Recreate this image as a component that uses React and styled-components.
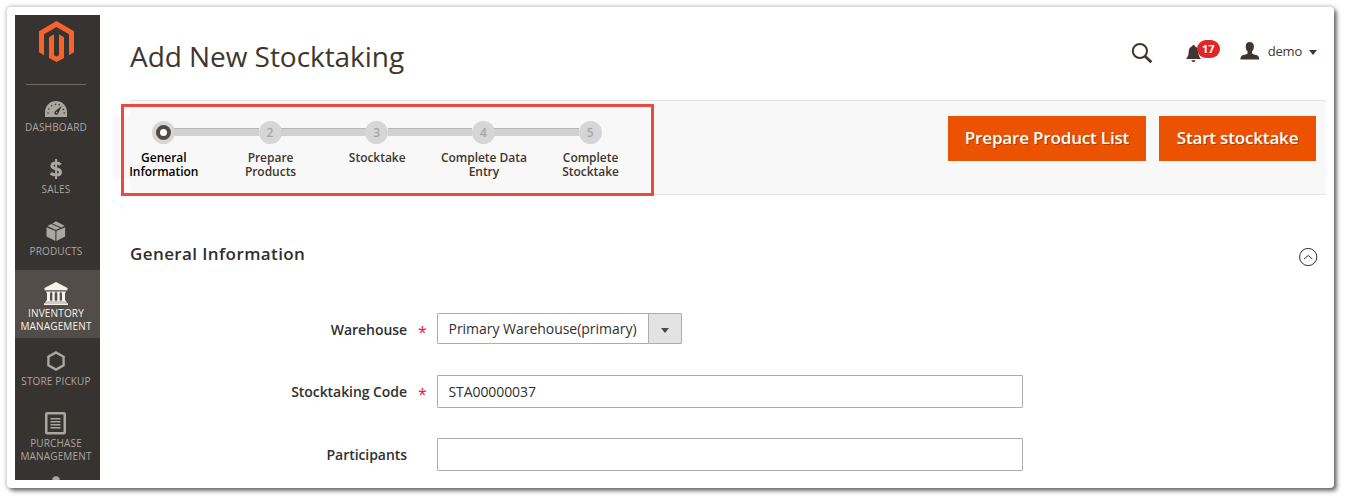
import React from "react";
import styled, { createGlobalStyle } from "styled-components";

const Global = createGlobalStyle`
  * { box-sizing: border-box; }
  html, body { margin: 0; background: #fff; }
  body { font-family: "Open Sans", "Noto Sans", sans-serif; color: #303030; overflow: hidden; }
`;

const Page = styled.div`
  width: 1347px;
  height: 501px;
  padding: 7px 13px 13px 7px;
  background: #fff;
`;

const Frame = styled.div`
  display: flex;
  width: 1327px;
  height: 481px;
  padding: 8px;
  background: #fff;
  border-radius: 4px;
  box-shadow: 0 0 3px 2px rgba(0, 0, 0, 0.15), 3px 3px 4px 0 rgba(0, 0, 0, 0.5);
`;

const Sidebar = styled.nav`
  width: 85px;
  height: 465px;
  flex: none;
  display: flex;
  flex-direction: column;
  align-items: stretch;
  background: #373330;
  overflow: hidden;
`;

const LogoBox = styled.div`
  height: 70px;
  flex: none;
  padding-top: 6px;
  margin: 0 14px 0 11px;
  border-bottom: 1px solid #736963;
  display: flex;
  justify-content: center;
  align-items: flex-start;
`;

const MenuItem = styled.a`
  display: flex;
  flex-direction: column;
  align-items: center;
  flex: none;
  width: 85px;
  height: ${(p) => p.$height}px;
  padding: ${(p) => p.$top || 10}px 3px 0 0;
  color: ${(p) => (p.$active ? "#f7f3eb" : "#aaa6a0")};
  background: ${(p) => (p.$active ? "#524d49" : "transparent")};
  font-size: 10px;
  line-height: 13px;
  letter-spacing: 0.15px;
  text-align: center;
  white-space: nowrap;
`;

const IconSlot = styled.span`
  height: 26px;
  margin-bottom: 1px;
  display: flex;
  align-items: center;
  justify-content: center;
`;

const Main = styled.main`
  flex: 1;
  min-width: 0;
  padding-left: 30px;
`;

const Header = styled.header`
  height: 85px;
  display: flex;
  justify-content: space-between;
`;

const Title = styled.h1`
  margin: 22px 0 0;
  font-size: 28px;
  line-height: 38px;
  font-weight: 400;
  letter-spacing: -0.05px;
  color: #41362f;
  white-space: nowrap;
`;

const HeaderTools = styled.div`
  display: flex;
  align-items: flex-start;
  padding: 25px 9px 0 0;
  color: #41362f;
`;

const SearchButton = styled.span`
  display: flex;
  padding-top: 2px;
  margin-right: 33px;
`;

const Notifications = styled.span`
  display: flex;
  position: relative;
  width: 35px;
  height: 24px;
  padding-top: 5px;
  margin-right: 19px;
`;

const Badge = styled.span`
  position: absolute;
  left: 11px;
  top: 0;
  width: 23px;
  height: 18px;
  border-radius: 9px;
  background: #e22626;
  color: #fff;
  font-size: 11px;
  font-weight: 700;
  line-height: 18px;
  text-align: center;
`;

const Account = styled.span`
  display: flex;
  align-items: flex-start;
  font-size: 13px;
  line-height: 22px;
  letter-spacing: -0.2px;
`;

const UserIcon = styled.span`
  display: flex;
  padding-top: 2px;
  margin-right: 8px;
`;

const Caret = styled.span`
  width: 0;
  height: 0;
  border: 4px solid transparent;
  border-top: 5px solid ${(p) => p.$color};
  border-bottom: 0;
  margin: ${(p) => p.$margin || "0"};
`;

const Toolbar = styled.section`
  height: 95px;
  display: flex;
  justify-content: space-between;
  align-items: flex-start;
  width: 1196px;
  background: #f8f8f8;
  border: solid #e3e3e3;
  border-width: 1px 0;
`;

/* The outline is an overlay, so it stays above the step list's background. */
const StepsOutline = styled.div`
  position: relative;
  width: 533px;
  height: 92px;
  margin: 3px 0 0 -9px;
  padding: 3px;
  flex: none;

  &::after {
    content: "";
    position: absolute;
    inset: 0;
    border: 3px solid #eb4a42;
  }
`;

/* The step list reaches past the left edge of the toolbar. */
const StepList = styled.ol`
  display: flex;
  list-style: none;
  width: 533px;
  height: 63px;
  margin: 9px 0 0 -14px;
  padding: 0;
  background: linear-gradient(#f8f8f8, #f8f8f8) 3px 0 / 30px 63px no-repeat;
`;

const Step = styled.li`
  width: 106.7px;
  flex: none;
  display: flex;
  flex-direction: column;
  align-items: center;
  padding-top: 5px;
  font-size: 12px;
  font-weight: 600;
  line-height: 14px;
  text-align: center;
  color: ${(p) => (p.$active ? "#000" : "#41362f")};
`;

const Track = styled.div`
  width: 100%;
  height: 23px;
  display: flex;
  align-items: flex-start;
`;

const Rail = styled.span`
  flex: 1;
  height: 8px;
  margin-top: 7px;
  background: ${(p) => (p.$hidden ? "transparent" : "#d1d1d1")};
  border-top: 1px solid ${(p) => (p.$hidden ? "transparent" : "#b8b8b8")};
`;

const Dot = styled.span`
  width: 23px;
  height: 23px;
  margin: 0 -0.5px;
  border-radius: 50%;
  background: #d6d6d6;
  color: #a6a6a6;
  font-size: 12px;
  line-height: 23px;
  display: flex;
  align-items: center;
  justify-content: center;
`;

const ActiveRing = styled.span`
  width: 15px;
  height: 15px;
  border-radius: 50%;
  border: 4px solid #514943;
  background: #fff;
`;

const StepLabel = styled.span`
  margin-top: 7px;
  padding-left: 1px;
  letter-spacing: -0.03px;
  white-space: pre-line;
`;

const Actions = styled.div`
  display: flex;
  gap: 13px;
  padding: 15px 10px 0 0;
`;

const Button = styled.button`
  width: ${(p) => p.$width}px;
  height: 45px;
  padding: 0 0 1px;
  border: 0;
  background: #eb5202;
  color: #fff;
  font: 600 17px/24px "Open Sans", sans-serif;
  letter-spacing: -0.17px;
  text-shadow: 1px 1px 0 rgba(0, 0, 0, 0.25);
  white-space: nowrap;
`;

const SectionHead = styled.div`
  display: flex;
  justify-content: space-between;
  align-items: flex-start;
  width: 1196px;
  margin-top: 46px;
  padding-right: 8px;
`;

const SectionTitle = styled.h2`
  margin: 0;
  font-size: 17px;
  line-height: 26px;
  font-weight: 600;
  letter-spacing: 0.4px;
`;

const Collapse = styled.span`
  display: flex;
  padding-top: 6px;
`;

const Fields = styled.div`
  margin-top: 46px;
`;

const Field = styled.div`
  display: flex;
  align-items: flex-start;
  height: ${(p) => p.$height}px;
`;

const Label = styled.label`
  width: 277px;
  padding-top: 7px;
  font-size: 14px;
  line-height: 19px;
  font-weight: 600;
  letter-spacing: -0.06px;
  text-align: right;
  white-space: nowrap;
`;

const Required = styled.span`
  width: 30px;
  padding: 10px 0 0 11px;
  color: #e22626;
  font-size: 16px;
  line-height: 19px;
`;

const Input = styled.div`
  width: 586px;
  height: 33px;
  border: 1px solid #adadad;
  border-radius: 1px;
  padding: 0 10.5px;
  font-size: 14px;
  line-height: 31px;
  letter-spacing: -0.08px;
`;

const Select = styled.div`
  display: flex;
  width: 245px;
  height: 31px;
  border: 1px solid #adadad;
  border-radius: 1px;
  font-size: 14px;
  line-height: 29px;
`;

const SelectValue = styled.span`
  flex: 1;
  padding-left: 10.5px;
  letter-spacing: -0.03px;
  white-space: nowrap;
`;

const SelectArrow = styled.span`
  width: 33px;
  flex: none;
  display: flex;
  align-items: center;
  justify-content: center;
  border-left: 1px solid #adadad;
  background: #e3e3e3;
`;

const LogoIcon = () => (
  <svg width="35" height="41" viewBox="0 0 35 40" preserveAspectRatio="none" fill="#f9632a">
    <path d="M17.5 0 35 10v20.5l-5 2.8V13L17.5 5.8 5 13v20.3l-5-2.8V10z" />
    <path d="M10 15.8 15 13v20.3l2.5 1.4 2.5-1.4V13l5 2.8v20.3L17.5 40 10 36.1z" />
  </svg>
);

const DashboardIcon = () => (
  <svg width="22" height="16" viewBox="0 0 22 16">
    <path d="M0 16V11a11 11 0 0 1 22 0v5z" fill="#aaa6a0" />
    <g fill="#373330">
      <circle cx="3" cy="12" r=".8" />
      <circle cx="3.8" cy="8" r=".8" />
      <circle cx="6.6" cy="4.8" r=".8" />
      <circle cx="10.5" cy="3.2" r=".8" />
      <circle cx="14.2" cy="3.8" r=".8" />
      <circle cx="18.4" cy="8.4" r=".8" />
      <circle cx="19.2" cy="12" r=".8" />
      <path d="M16.8 4.8 13.4 12a2 2 0 1 1-3-2z" />
    </g>
    <circle cx="11.7" cy="11.5" r=".8" fill="#aaa6a0" />
  </svg>
);

const DashboardSlot = styled.span`
  display: flex;
  padding-top: 4px;
`;

const SalesIcon = () => (
  <svg width="14" height="20" viewBox="0 0 14 20" fill="none" stroke="#aaa6a0">
    <path d="M11.5 5.7C10.5 4.6 9 4 7.2 4 4.6 4 2.9 5.1 2.9 6.8c0 4 8.6 2 8.6 6.2 0 1.9-1.8 3-4.4 3-2.1 0-4-.7-5.4-1.8" strokeWidth="3" />
    <path d="M7.1 0v20" strokeWidth="2" />
  </svg>
);

const ProductsIcon = () => (
  <svg width="20" height="20" viewBox="-.5 0 20 20" fill="#aaa6a0">
    <path d="M0 6.2 8.9 10v10L0 15.6z" />
    <path d="M18.6 6.2 9.9 10v10l8.7-4.4z" />
    <path d="M.8 4.9 4.7 3l9 4-4.2 1.9z" />
    <path d="M5.9 2.4 9.5.3l8.6 4.4-3.3 1.8z" />
  </svg>
);

const WarehouseIcon = () => (
  <svg width="24" height="24" viewBox="0 -1 24 24" fill="#f7f3eb">
    <path d="M12 0 23.5 6v2.2H.5V6z" />
    <path d="M2 9.4h5v1H6v8h1v1H2v-1h1v-8H2zM7.3 9.4h4.4v1h-1v8h1v1H7.3v-1h1v-8h-1zM12.3 9.4h4.4v1h-1v8h1v1h-4.4v-1h1v-8h-1zM17 9.4h5v1h-1v8h1v1h-5v-1h1v-8h-1z" />
    <path d="M1.3 19.4h21.4v1.3H1.3zM0 21.3h24V23H0z" />
  </svg>
);

const HexagonIcon = () => (
  <svg width="18" height="20" viewBox="0 0 18 20" fill="none" stroke="#aaa6a0" strokeWidth="2.4">
    <path d="M9 1.5 16.6 5.8v8.4L9 18.5 1.4 14.2V5.8z" />
  </svg>
);

const ListIcon = () => (
  <svg width="22" height="24" viewBox="0 -1 22 24">
    <rect x="1.25" y="1.25" width="18.5" height="20" rx="1" fill="none" stroke="#aaa6a0" strokeWidth="2.5" />
    <path d="M5.5 6.75h10M5.5 9.75h10M5.5 12.75h10M5.5 15.75h10" stroke="#aaa6a0" strokeWidth="1.5" />
  </svg>
);

const PartialIcon = () => (
  <svg width="20" height="20" viewBox="0 0 20 20" fill="#aaa6a0">
    <circle cx="10" cy="4" r="3.7" />
    <path d="M4 20v-5a6 6 0 0 1 12 0v5z" />
  </svg>
);

const SearchIcon = () => (
  <svg width="22" height="22" viewBox="0 0 22 22" fill="none" stroke="#41362f">
    <circle cx="8.9" cy="9" r="7.1" strokeWidth="2" />
    <path d="m13.8 14 6.6 6.2" strokeWidth="2.8" />
  </svg>
);

const BellIcon = () => (
  <svg width="15" height="18" viewBox="0 0 15 18" fill="#41362f">
    <path d="M7.5 0c.8 0 1.2.5 1.2 1.2 2.3.6 3.3 2.3 3.5 4.8.2 3.7.7 5.6 2.8 8.1H0c2.1-2.5 2.6-4.4 2.8-8.1.2-2.5 1.2-4.2 3.5-4.8C6.3.5 6.7 0 7.5 0z" />
    <path d="M5.4 15.2h4.2c-.3 1.2-1 1.8-2.1 1.8s-1.8-.6-2.1-1.8z" />
  </svg>
);

const PersonIcon = () => (
  <svg width="20" height="18" viewBox="0 0 20 18" fill="#41362f">
    <path d="M9.7 0c2.7 0 4.2 1.7 4.2 4.5 0 2-.7 3.9-1.9 5v1.7c.6 1 2.2 1.3 4.2 1.9 2.2.7 3 1.6 3 4.5H.4c0-2.9.8-3.8 3-4.5 2-.6 3.6-.9 4.2-1.9V9.5c-1.2-1.1-1.9-3-1.9-5C5.7 1.7 7.1 0 9.7 0z" />
  </svg>
);

const CollapseIcon = () => (
  <svg width="20" height="20" viewBox="0 0 20 20" fill="none" stroke="#303030">
    <circle cx="10.2" cy="10" r="8.6" strokeWidth="1" />
    <path d="m6 12 4.2-3.5 4.2 3.5" strokeWidth="1" />
  </svg>
);

const MENU = [
  { label: "DASHBOARD", icon: DashboardIcon, height: 61, top: 9, slot: DashboardSlot },
  { label: "SALES", icon: SalesIcon, height: 62 },
  { label: "PRODUCTS", icon: ProductsIcon, height: 62 },
  { label: <>INVENTORY<br />MANAGEMENT</>, icon: WarehouseIcon, height: 68, active: true },
  { label: "STORE PICKUP", icon: HexagonIcon, height: 62 },
  { label: <>PURCHASE<br />MANAGEMENT</>, icon: ListIcon, height: 63 },
  { label: "", icon: PartialIcon, height: 60 },
];

const STEPS = [
  "General\nInformation",
  "Prepare\nProducts",
  "Stocktake",
  "Complete Data\nEntry",
  "Complete\nStocktake",
];

export default function App() {
  return (
    <Page>
      <Global />
      <Frame>
        <Sidebar>
          <LogoBox><LogoIcon /></LogoBox>
          {MENU.map(({ label, icon: Icon, height, active, top, slot: Slot = React.Fragment }, i) => (
            <MenuItem key={i} $height={height} $active={active} $top={top}>
              <IconSlot><Slot><Icon /></Slot></IconSlot>
              <span>{label}</span>
            </MenuItem>
          ))}
        </Sidebar>
        <Main>
          <Header>
            <Title>Add New Stocktaking</Title>
            <HeaderTools>
              <SearchButton><SearchIcon /></SearchButton>
              <Notifications>
                <BellIcon />
                <Badge>17</Badge>
              </Notifications>
              <Account>
                <UserIcon><PersonIcon /></UserIcon>
                demo
                <Caret $color="#41362f" $margin="10px 0 0 7px" />
              </Account>
            </HeaderTools>
          </Header>
          <Toolbar>
            <StepsOutline>
              <StepList>
                {STEPS.map((label, i) => (
                  <Step key={label} $active={i === 0}>
                    <Track>
                      <Rail $hidden={i === 0} />
                      <Dot>{i === 0 ? <ActiveRing /> : i + 1}</Dot>
                      <Rail $hidden={i === STEPS.length - 1} />
                    </Track>
                    <StepLabel>{label}</StepLabel>
                  </Step>
                ))}
              </StepList>
            </StepsOutline>
            <Actions>
              <Button $width={198}>Prepare Product List</Button>
              <Button $width={157}>Start stocktake</Button>
            </Actions>
          </Toolbar>
          <SectionHead>
            <SectionTitle>General Information</SectionTitle>
            <Collapse><CollapseIcon /></Collapse>
          </SectionHead>
          <Fields>
            <Field $height={62}>
              <Label>Warehouse</Label>
              <Required>*</Required>
              <Select>
                <SelectValue>Primary Warehouse(primary)</SelectValue>
                <SelectArrow><Caret $color="#514943" $margin="3px 0 0 0" /></SelectArrow>
              </Select>
            </Field>
            <Field $height={63}>
              <Label>Stocktaking Code</Label>
              <Required>*</Required>
              <Input>STA00000037</Input>
            </Field>
            <Field $height={33}>
              <Label>Participants</Label>
              <Required />
              <Input />
            </Field>
          </Fields>
        </Main>
      </Frame>
    </Page>
  );
}
